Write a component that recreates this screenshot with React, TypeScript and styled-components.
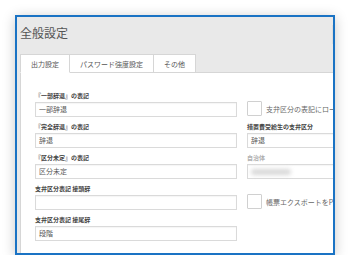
import { styled, createGlobalStyle } from "styled-components";

const GlobalStyle = createGlobalStyle`
	html, body {
		margin: 0;
		padding: 0;
		background: #fff;
	}
	body {
		font-family: "Noto Sans CJK JP", "Noto Sans", sans-serif;
	}
`;

type Field = {
	label: string;
	value?: string;
	muted?: boolean;
	blurred?: boolean;
};

type Cell = { kind: "field"; field: Field } | { kind: "check"; text: string } | null;

const rows: [Cell, Cell][] = [
	[
		{ kind: "field", field: { label: "『一部辞退』の表記", value: "一部辞退" } },
		{ kind: "check", text: "支弁区分の表記にローマ字を使用する" },
	],
	[
		{ kind: "field", field: { label: "『完全辞退』の表記", value: "辞退" } },
		{ kind: "field", field: { label: "措置費受給生の支弁区分", value: "辞退" } },
	],
	[
		{ kind: "field", field: { label: "『区分未定』の表記", value: "区分未定" } },
		{ kind: "field", field: { label: "自治体", muted: true, blurred: true } },
	],
	[
		{ kind: "field", field: { label: "支弁区分表記 接頭辞", value: "" } },
		{ kind: "check", text: "帳票エクスポートをPDFで行う" },
	],
	[{ kind: "field", field: { label: "支弁区分表記 接尾辞", value: "段階" } }, null],
];

const tabs = ["出力設定", "パスワード強度設定", "その他"];

function renderCell(cell: Cell, key: string) {
	if (!cell) return <div key={key} />;
	if (cell.kind === "check") {
		return (
			<CheckRow key={key}>
				<CheckBox />
				<CheckText>{cell.text}</CheckText>
			</CheckRow>
		);
	}
	const { field } = cell;
	return (
		<FieldBox key={key}>
			<Label $muted={field.muted}>{field.label}</Label>
			<Input>
				{field.blurred ? <Blur /> : field.value}
			</Input>
		</FieldBox>
	);
}

export default function App() {
	return (
		<>
			<GlobalStyle />
			<Dialog>
				<Header>
					<Title>全般設定</Title>
					<CloseButton />
				</Header>
				<Tabs>
					{tabs.map((t, i) => (
						<Tab key={t} $active={i === 0}>
							{t}
						</Tab>
					))}
				</Tabs>
				<Panel>
					<Grid>
						{rows.map((row, i) => [
							renderCell(row[0], `l${i}`),
							renderCell(row[1], `r${i}`),
						])}
					</Grid>
				</Panel>
			</Dialog>
		</>
	);
}

const Dialog = styled.div`
	margin: 15px 0 0 15px;
	width: 320px;
	height: 240px;
	box-sizing: border-box;
	border: 2px solid #1a73c4;
	background: #e9e9e9;
	box-shadow: 0 2px 12px rgb(0 0 0 / 0.22);
	overflow: hidden;
	display: flex;
	flex-direction: column;
	padding-left: 3px;
`;

const Header = styled.div`
	display: flex;
	align-items: flex-start;
	justify-content: space-between;
	padding-top: 8px;
	height: 29px;
`;

const Title = styled.h1`
	margin: 0;
	font-size: 12px;
	line-height: 16px;
	font-weight: 400;
	color: #555;
`;

const CloseButton = styled.div`
	width: 20px;
	height: 19px;
	margin-top: 0;
	margin-right: -19px;
	background: #fafafa;
	border: 1px solid #ddd;
	box-sizing: border-box;
`;

const Tabs = styled.div`
	display: flex;
	height: 19px;
`;

const Tab = styled.div<{ $active?: boolean }>`
	box-sizing: border-box;
	height: 19px;
	padding: 0 10px;
	font-size: 7px;
	line-height: 19px;
	color: #555;
	background: #fff;
	border: 1px solid #d6d6d6;
	border-bottom: ${(p) => (p.$active ? "1px solid #fff" : "1px solid #d6d6d6")};
	margin-right: -1px;
	position: relative;
	z-index: ${(p) => (p.$active ? 1 : 0)};
	white-space: nowrap;
`;

const Panel = styled.div`
	flex: 1;
	background: #fff;
	border-left: 1px solid #d6d6d6;
	border-top: 1px solid #d6d6d6;
	margin-top: -1px;
	padding: 18px 0 0 14px;
	overflow: hidden;
`;

const Grid = styled.div`
	display: grid;
	grid-template-columns: 202px 200px;
	column-gap: 10px;
	row-gap: 5px;
	align-items: end;
`;

const FieldBox = styled.div`
	display: flex;
	flex-direction: column;
	gap: 2px;
`;

const Label = styled.div<{ $muted?: boolean }>`
	font-size: 6px;
	line-height: 9px;
	font-weight: 700;
	color: ${(p) => (p.$muted ? "#b0b0b0" : "#444")};
	white-space: nowrap;
`;

const Input = styled.div`
	box-sizing: border-box;
	height: 15px;
	border: 1px solid #dadada;
	box-shadow: inset 0 1px 1px rgb(0 0 0 / 0.04);
	padding: 0 3px;
	font-size: 7px;
	line-height: 13px;
	color: #555;
	display: flex;
	align-items: center;
	white-space: nowrap;
`;

const Blur = styled.span`
	width: 40px;
	height: 6px;
	background: #d8d8d8;
	filter: blur(2px);
	border-radius: 3px;
`;

const CheckRow = styled.div`
	display: flex;
	align-items: center;
	gap: 4px;
	margin-bottom: 1px;
`;

const CheckBox = styled.div`
	flex: none;
	width: 15px;
	height: 15px;
	box-sizing: border-box;
	border: 1px solid #d0d0d0;
	border-radius: 1px;
	background: #fff;
`;

const CheckText = styled.span`
	font-size: 7px;
	color: #666;
	white-space: nowrap;
`;
